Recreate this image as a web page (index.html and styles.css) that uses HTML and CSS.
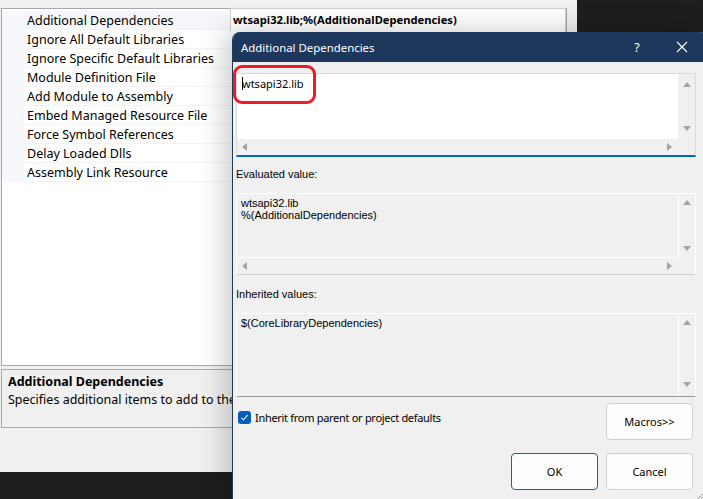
FILE: index.html
```html
<!DOCTYPE html>
<html>
<head>
<meta charset="utf-8">
<link rel="stylesheet" href="styles.css">
</head>
<body>
<div class="main">
  <div class="grid">
    <div class="row sel">
      <div class="gut"></div>
      <div class="name">Additional Dependencies</div>
      <div class="val">wtsapi32.lib;%(AdditionalDependencies)</div>
    </div>
    <div class="row"><div class="gut"></div><div class="name">Ignore All Default Libraries</div><div class="val"></div></div>
    <div class="row"><div class="gut"></div><div class="name">Ignore Specific Default Libraries</div><div class="val"></div></div>
    <div class="row"><div class="gut"></div><div class="name">Module Definition File</div><div class="val"></div></div>
    <div class="row"><div class="gut"></div><div class="name">Add Module to Assembly</div><div class="val"></div></div>
    <div class="row"><div class="gut"></div><div class="name">Embed Managed Resource File</div><div class="val"></div></div>
    <div class="row"><div class="gut"></div><div class="name">Force Symbol References</div><div class="val"></div></div>
    <div class="row"><div class="gut"></div><div class="name">Delay Loaded Dlls</div><div class="val"></div></div>
    <div class="row"><div class="gut"></div><div class="name">Assembly Link Resource</div><div class="val"></div></div>
  </div>
  <div class="desc">
    <div class="desc-title">Additional Dependencies</div>
    <div class="desc-text">Specifies additional items to add to the link command line. [i.e. kernel32.lib]</div>
  </div>
</div>

<div class="dialog">
  <div class="titlebar">
    <div class="title">Additional Dependencies</div>
    <div class="help">?</div>
    <div class="close">
      <svg width="12" height="12" viewBox="0 0 12 12"><path d="M1 1 L11 11 M11 1 L1 11" stroke="#ffffff" stroke-width="1.1" fill="none"/></svg>
    </div>
  </div>
  <div class="body">
    <div class="edit">
      <div class="edit-text"><span class="caret"></span>wtsapi32.lib</div>
      <div class="vscroll"><span class="tri up"></span><span class="tri down"></span></div>
      <div class="hscroll"><span class="tri left"></span><span class="tri right"></span></div>
      <div class="corner"></div>
    </div>
    <div class="label l1">Evaluated value:</div>
    <div class="ro eval">
      <div class="ro-text">wtsapi32.lib<br>%(AdditionalDependencies)</div>
      <div class="vscroll ro-v"><span class="tri up"></span><span class="tri down"></span></div>
      <div class="hscroll ro-h"><span class="tri left"></span><span class="tri right"></span></div>
      <div class="corner"></div>
    </div>
    <div class="label l2">Inherited values:</div>
    <div class="ro inh">
      <div class="ro-text">$(CoreLibraryDependencies)</div>
      <div class="vscroll ro-v tall"><span class="tri up"></span><span class="tri down"></span></div>
    </div>
    <div class="opts">
      <label class="check">
        <span class="box"><svg width="9" height="9" viewBox="0 0 9 9"><path d="M1.5 4.8 L3.6 6.8 L7.6 2.2" stroke="#ffffff" stroke-width="1.1" fill="none"/></svg></span>
        <span>Inherit from parent or project defaults</span>
      </label>
      <div class="btn">Macros&gt;&gt;</div>
    </div>
    <div class="actions">
      <div class="btn primary">OK</div>
      <div class="btn">Cancel</div>
    </div>
  </div>
  <svg class="grip" width="7" height="7" viewBox="0 0 7 7"><path d="M6 1 L1 6 M6 4 L4 6" stroke="#a0a0a0" stroke-width="1"/></svg>
</div>

<div class="annot"></div>
</body>
</html>
```

FILE: styles.css
```css
html, body {
  margin: 0;
  padding: 0;
}
body {
  width: 703px;
  height: 499px;
  overflow: hidden;
  position: relative;
  background: #1e1e1e;
  font-family: "Noto Sans", "Open Sans", sans-serif;
  color: #000;
}

.main {
  width: 577px;
  height: 472px;
  background: #f0f0f0;
  padding: 8px 0 0 1px;
  box-sizing: border-box;
  display: flex;
  flex-direction: column;
}

.grid {
  width: 566px;
  height: 358px;
  box-sizing: border-box;
  border: 1px solid #a9a9a9;
  background: #ffffff;
  padding-top: 2px;
  display: flex;
  flex-direction: column;
}
.row {
  height: 19px;
  display: flex;
  font-size: 12.5px;
  line-height: 19px;
}
.gut {
  width: 22px;
  background: #f6f8fb;
  flex: none;
}
.name {
  width: 206px;
  flex: none;
  padding-left: 3px;
  box-sizing: border-box;
  border-bottom: 1px solid #f3f3f3;
  white-space: nowrap;
}
.row.sel .name {
  background: #f4f6fa;
}
.val {
  flex: 1;
  white-space: nowrap;
}
.row.sel .val {
  font-weight: bold;
  padding-left: 2px;
  margin-top: -3px;
  height: 24px;
  line-height: 22px;
  border: 1px solid #cfcfcf;
  border-bottom: none;
  box-sizing: border-box;
  font-size: 11.2px;
}

.desc {
  margin-top: 3px;
  width: 566px;
  height: 59px;
  box-sizing: border-box;
  border: 1px solid #a9a9a9;
  padding: 3px 0 0 6px;
  font-size: 12.5px;
  line-height: 18px;
  white-space: nowrap;
  overflow: hidden;
}
.desc-title {
  font-weight: bold;
}

/* dialog */
.dialog {
  position: absolute;
  left: 232px;
  top: 32px;
  width: 474px;
  height: 470px;
  background: #f0f0f0;
  border-left: 1px solid #1d3a5f;
  border-radius: 8px 8px 0 0;
  box-shadow: -6px 0 28px rgba(0, 0, 0, 0.22);
  overflow: hidden;
}
.titlebar {
  height: 30px;
  background: #1d385c;
  display: flex;
  align-items: center;
  color: #ffffff;
  font-size: 11.4px;
}
.title {
  flex: 1;
  padding-left: 8px;
}
.help {
  width: 20px;
  text-align: center;
  font-size: 12.5px;
  margin-right: 25px;
}
.close {
  width: 20px;
  display: flex;
  justify-content: center;
  margin-right: 15px;
}

.body {
  padding: 11px 0 0 3px;
  display: flex;
  flex-direction: column;
  font-family: "Liberation Sans", Arial, sans-serif;
  font-size: 11px;
}

.edit {
  width: 460px;
  height: 84px;
  box-sizing: border-box;
  border: 1px solid #dadada;
  border-bottom: 2px solid #0067c0;
  display: grid;
  grid-template-columns: 1fr 17px;
  grid-template-rows: 65px 16px;
}
.edit-text {
  background: #ffffff;
  padding: 2px 0 0 5px;
  font-family: "Noto Sans", "Open Sans", sans-serif;
  font-size: 11px;
  line-height: 15px;
}
.caret {
  display: inline-block;
  width: 1px;
  height: 13px;
  background: #000;
  vertical-align: -2px;
  margin-right: -1px;
}
.vscroll {
  background: #f0f0f0;
  display: flex;
  flex-direction: column;
  align-items: center;
  justify-content: space-between;
  padding: 8px 0;
  box-sizing: border-box;
}
.hscroll {
  background: #f0f0f0;
  display: flex;
  align-items: center;
  justify-content: space-between;
  padding: 0 6px 0 5px;
}
.corner {
  background: #f0f0f0;
}

.tri {
  width: 0;
  height: 0;
  display: block;
}
.tri.up {
  border-left: 4px solid transparent;
  border-right: 4px solid transparent;
  border-bottom: 5px solid #a3a3a3;
}
.tri.down {
  border-left: 4px solid transparent;
  border-right: 4px solid transparent;
  border-top: 5px solid #a3a3a3;
}
.tri.left {
  border-top: 4px solid transparent;
  border-bottom: 4px solid transparent;
  border-right: 5px solid #a3a3a3;
}
.tri.right {
  border-top: 4px solid transparent;
  border-bottom: 4px solid transparent;
  border-left: 5px solid #a3a3a3;
}

.label {
  height: 14px;
  line-height: 14px;
  color: #000;
}
.l1 {
  margin: 10px 0 12px 0;
}
.l2 {
  margin: 12px 0 12px 0;
}

.ro {
  width: 460px;
  box-sizing: border-box;
  border: 1px solid #ffffff;
  display: grid;
  grid-template-columns: 1fr 17px;
  background: #f0f0f0;
}
.eval {
  height: 82px;
  grid-template-rows: 63px 17px;
  border-bottom-color: #d0d0d0;
}
.inh {
  height: 84px;
  grid-template-rows: 1fr;
  border-bottom: 1px solid #9a9a9a;
}
.ro-text {
  padding: 3px 0 0 4px;
  line-height: 12px;
  color: #000;
}
.ro-v {
  border-left: 1px solid #ffffff;
  padding: 6px 0;
}
.ro-v.tall {
  padding: 6px 0 9px;
}
.ro-h {
  border-top: 1px solid #ffffff;
}

.opts {
  width: 457px;
  margin-top: 6px;
  display: flex;
  justify-content: space-between;
  align-items: flex-start;
}
.check {
  display: flex;
  align-items: center;
  gap: 4px;
  margin-top: 7px;
  margin-left: 2px;
  font-family: "Noto Sans", "Open Sans", sans-serif;
  font-size: 11px;
  letter-spacing: -0.3px;
}
.box {
  width: 13px;
  height: 13px;
  border-radius: 3px;
  background: #005fb8;
  display: flex;
  align-items: center;
  justify-content: center;
}

.btn {
  width: 87px;
  height: 37px;
  box-sizing: border-box;
  background: #fdfdfd;
  border: 1px solid #d0d0d0;
  border-radius: 4px;
  display: flex;
  align-items: center;
  justify-content: center;
  font-family: "Noto Sans", "Open Sans", sans-serif;
  font-size: 11px;
}
.btn.primary {
  border-color: #0067c0;
}
.actions {
  width: 457px;
  margin-top: 13px;
  display: flex;
  justify-content: flex-end;
  gap: 8px;
}

.grip {
  position: absolute;
  left: 464px;
  top: 461px;
}

.annot {
  position: absolute;
  left: 233px;
  top: 65px;
  width: 83px;
  height: 39px;
  box-sizing: border-box;
  border: 3px solid #ed1c24;
  border-radius: 9px;
}
```
